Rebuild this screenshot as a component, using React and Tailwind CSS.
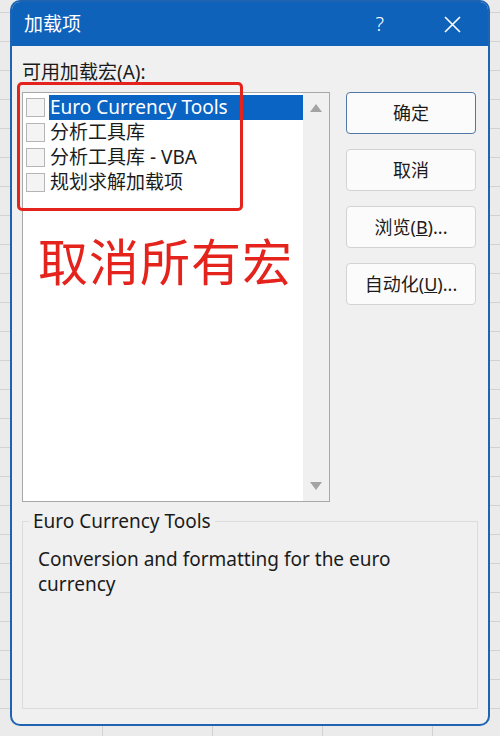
const font = { fontFamily: '"Noto Sans", "Noto Sans CJK SC", sans-serif' };

const items = ['Euro Currency Tools', '分析工具库', '分析工具库 - VBA', '规划求解加载项'];

function Btn({ children, primary }) {
  return (
    <button
      className={`flex h-[42px] w-[130px] items-center justify-center rounded-[4px] border bg-[#fbfbfb] text-[18px] text-[#1b1b1b] ${
        primary ? 'border-[#4f78a4]' : 'border-[#d3d3d3]'
      }`}
    >
      {children}
    </button>
  );
}

export default function App() {
  return (
    <div
      className="relative h-[736px] w-[500px] overflow-hidden bg-[#ebebeb] bg-[linear-gradient(#d2d2d2_1px,transparent_1px),linear-gradient(90deg,#d2d2d2_1px,transparent_1px)] bg-[size:110px_29px] bg-[position:102px_12px]"
      style={font}
    >
      <div className="ml-[10px] flex h-[726px] w-[480px] flex-col overflow-hidden rounded-[10px] border-2 border-[#1f63b3] bg-[#f0f0f0]">
        <div className="flex h-[44px] shrink-0 items-center bg-[#0f62ba] pl-[12px] pr-[27px] text-white">
          <span className="text-[19px]">加载项</span>
          <span className="ml-auto mr-[60px] text-[20px] font-light">?</span>
          <svg width="17" height="17" viewBox="0 0 17 17" fill="none" stroke="white" strokeWidth="1.6">
            <path d="M1 1L16 16M16 1L1 16" />
          </svg>
        </div>

        <div className="flex flex-1 flex-col px-[10px] pt-[15px]">
          <div className="text-[19px] leading-[22px] text-[#1b1b1b]">可用加载宏(A):</div>
          <div className="mt-[9px] flex gap-[16px]">
            <div className="relative flex h-[410px] w-[308px] border border-[#a8a8a8] bg-white">
              <div className="flex-1 pl-[3px] pt-[2px]">
                {items.map((t, i) => (
                  <div key={t} className="flex h-[25px] items-center">
                    <span className="h-[19px] w-[19px] shrink-0 border border-[#b5b5b5] bg-[#f4f4f4]" />
                    <span
                      className={`ml-[4px] flex h-[25px] items-center pl-[1px] pr-[10px] text-[19px] ${
                        i === 0 ? 'flex-1 bg-[#0a64c4] text-white' : 'text-[#1b1b1b]'
                      }`}
                    >
                      {t}
                    </span>
                  </div>
                ))}
              </div>
              <div className="flex w-[26px] flex-col items-center justify-between bg-[#f0f0f0] py-[11px]">
                <svg width="12" height="8" viewBox="0 0 12 8">
                  <path d="M6 0L12 8H0Z" fill="#a3a3a3" />
                </svg>
                <svg width="12" height="8" viewBox="0 0 12 8">
                  <path d="M0 0H12L6 8Z" fill="#a3a3a3" />
                </svg>
              </div>
              <div className="absolute left-[15px] top-[139px] text-[50px] leading-[60px] tracking-[1px] text-[#e3231c]">
                取消所有宏
              </div>
            </div>
            <div className="flex flex-col gap-[15px]">
              <Btn primary>确定</Btn>
              <Btn>取消</Btn>
              <Btn>
                浏览(<span className="underline">B</span>)...
              </Btn>
              <Btn>
                自动化(<span className="underline">U</span>)...
              </Btn>
            </div>
          </div>

          <div className="relative mt-[19px] h-[188px] border border-[#dcdcdc]">
            <span className="absolute -top-[14px] left-[6px] bg-[#f0f0f0] px-[4px] text-[19px] leading-[26px] text-[#1b1b1b]">
              Euro Currency Tools
            </span>
            <p className="pl-[15px] pr-[60px] pt-[25px] text-[19px] leading-[25px] text-[#1b1b1b]">
              Conversion and formatting for the euro currency
            </p>
          </div>
        </div>
      </div>

      <div className="absolute left-[17px] top-[82px] h-[129px] w-[226px] rounded-[5px] border-[3px] border-[#e5231d]" />
    </div>
  );
}
